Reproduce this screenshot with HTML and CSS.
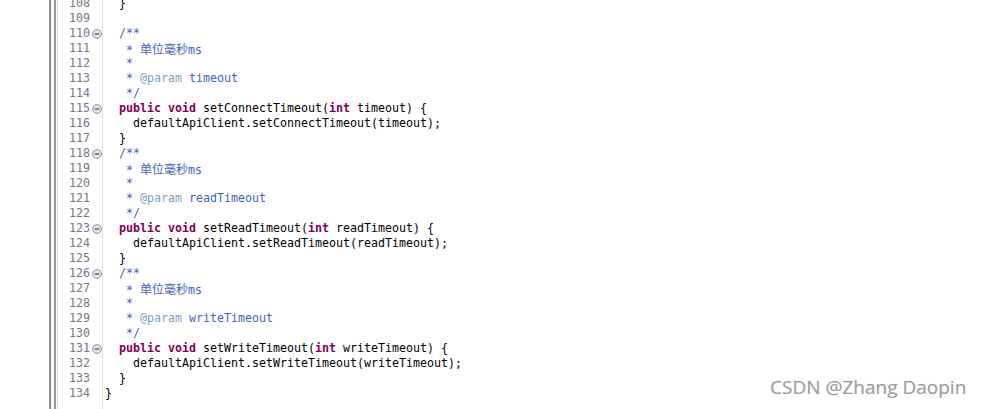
FILE: index.html
```html
<!DOCTYPE html>
<html lang="zh">
<head>
<meta charset="utf-8">
<title>Editor</title>
<link rel="stylesheet" href="styles.css">
</head>
<body>
<div class="editor">
  <div class="blank"></div>
  <div class="rail1"><div class="rail2"><div class="rail3">
    <div class="gutter">
      <div class="list">
        <div class="ln"><span class="num">108</span><span class="fold"></span></div>
        <div class="ln"><span class="num">109</span><span class="fold"></span></div>
        <div class="ln"><span class="num">110</span><span class="fold"><svg class="ficon" viewBox="0 0 10 10"><circle cx="5" cy="5" r="4.4"/><line x1="2.8" y1="5" x2="7.2" y2="5"/></svg></span></div>
        <div class="ln"><span class="num">111</span><span class="fold"></span></div>
        <div class="ln"><span class="num">112</span><span class="fold"></span></div>
        <div class="ln"><span class="num">113</span><span class="fold"></span></div>
        <div class="ln"><span class="num">114</span><span class="fold"></span></div>
        <div class="ln"><span class="num">115</span><span class="fold"><svg class="ficon" viewBox="0 0 10 10"><circle cx="5" cy="5" r="4.4"/><line x1="2.8" y1="5" x2="7.2" y2="5"/></svg></span></div>
        <div class="ln"><span class="num">116</span><span class="fold"></span></div>
        <div class="ln"><span class="num">117</span><span class="fold"></span></div>
        <div class="ln"><span class="num">118</span><span class="fold"><svg class="ficon" viewBox="0 0 10 10"><circle cx="5" cy="5" r="4.4"/><line x1="2.8" y1="5" x2="7.2" y2="5"/></svg></span></div>
        <div class="ln"><span class="num">119</span><span class="fold"></span></div>
        <div class="ln"><span class="num">120</span><span class="fold"></span></div>
        <div class="ln"><span class="num">121</span><span class="fold"></span></div>
        <div class="ln"><span class="num">122</span><span class="fold"></span></div>
        <div class="ln"><span class="num">123</span><span class="fold"><svg class="ficon" viewBox="0 0 10 10"><circle cx="5" cy="5" r="4.4"/><line x1="2.8" y1="5" x2="7.2" y2="5"/></svg></span></div>
        <div class="ln"><span class="num">124</span><span class="fold"></span></div>
        <div class="ln"><span class="num">125</span><span class="fold"></span></div>
        <div class="ln"><span class="num">126</span><span class="fold"><svg class="ficon" viewBox="0 0 10 10"><circle cx="5" cy="5" r="4.4"/><line x1="2.8" y1="5" x2="7.2" y2="5"/></svg></span></div>
        <div class="ln"><span class="num">127</span><span class="fold"></span></div>
        <div class="ln"><span class="num">128</span><span class="fold"></span></div>
        <div class="ln"><span class="num">129</span><span class="fold"></span></div>
        <div class="ln"><span class="num">130</span><span class="fold"></span></div>
        <div class="ln"><span class="num">131</span><span class="fold"><svg class="ficon" viewBox="0 0 10 10"><circle cx="5" cy="5" r="4.4"/><line x1="2.8" y1="5" x2="7.2" y2="5"/></svg></span></div>
        <div class="ln"><span class="num">132</span><span class="fold"></span></div>
        <div class="ln"><span class="num">133</span><span class="fold"></span></div>
        <div class="ln"><span class="num">134</span><span class="fold"></span></div>
      </div>
    </div>
    <div class="code">
      <div class="list">
<div class="cl">  }</div>
<div class="cl"> </div>
<div class="cl"><span class="doc">  /**</span></div>
<div class="cl"><span class="doc">   * <span class="cjk">单位毫秒</span>ms</span></div>
<div class="cl"><span class="doc">   *</span></div>
<div class="cl"><span class="doc">   * <span class="tag">@param</span> timeout</span></div>
<div class="cl"><span class="doc">   */</span></div>
<div class="cl">  <span class="kw">public</span> <span class="kw">void</span> setConnectTimeout(<span class="kw">int</span> timeout) {</div>
<div class="cl">    defaultApiClient.setConnectTimeout(timeout);</div>
<div class="cl">  }</div>
<div class="cl"><span class="doc">  /**</span></div>
<div class="cl"><span class="doc">   * <span class="cjk">单位毫秒</span>ms</span></div>
<div class="cl"><span class="doc">   *</span></div>
<div class="cl"><span class="doc">   * <span class="tag">@param</span> readTimeout</span></div>
<div class="cl"><span class="doc">   */</span></div>
<div class="cl">  <span class="kw">public</span> <span class="kw">void</span> setReadTimeout(<span class="kw">int</span> readTimeout) {</div>
<div class="cl">    defaultApiClient.setReadTimeout(readTimeout);</div>
<div class="cl">  }</div>
<div class="cl"><span class="doc">  /**</span></div>
<div class="cl"><span class="doc">   * <span class="cjk">单位毫秒</span>ms</span></div>
<div class="cl"><span class="doc">   *</span></div>
<div class="cl"><span class="doc">   * <span class="tag">@param</span> writeTimeout</span></div>
<div class="cl"><span class="doc">   */</span></div>
<div class="cl">  <span class="kw">public</span> <span class="kw">void</span> setWriteTimeout(<span class="kw">int</span> writeTimeout) {</div>
<div class="cl">    defaultApiClient.setWriteTimeout(writeTimeout);</div>
<div class="cl">  }</div>
<div class="cl">}</div>
      </div>
    </div>
  </div></div></div>
</div>
<div class="watermark">CSDN @Zhang Daopin</div>
</body>
</html>
```

FILE: styles.css
```css
html, body {
  margin: 0;
  padding: 0;
  background: #ffffff;
  height: 100%;
  overflow: hidden;
}

body {
  position: relative;
}

.editor {
  display: flex;
  height: 409px;
  overflow: hidden;
  font-family: "DejaVu Sans Mono", "Liberation Mono", monospace;
  font-size: 11.63px;
  line-height: 15px;
}

.blank {
  width: 49px;
  flex: none;
}

.rail1 {
  flex: 1;
  display: flex;
  border-left: 2px solid #8e8e8e;
  padding-left: 3px;
}

.rail2 {
  flex: 1;
  display: flex;
  border-left: 2px solid #9b9b9b;
  padding-left: 1px;
}

.rail3 {
  flex: 1;
  display: flex;
  border-left: 1px solid #d4d4d4;
}

.gutter {
  flex: none;
  width: 44px;
  border-right: 1px solid #e2e2e2;
}

.list {
  margin-top: -4px;
}

.ln {
  display: flex;
  height: 15px;
  align-items: center;
}

.num {
  width: 32px;
  text-align: right;
  color: #7b7583;
}

.fold {
  width: 12px;
  height: 15px;
  display: flex;
  align-items: center;
  padding-left: 2px;
  box-sizing: border-box;
}

.ficon {
  width: 10px;
  height: 10px;
  display: block;
}

.ficon circle {
  fill: #dfe4ea;
  stroke: #8796a6;
  stroke-width: 1;
}

.ficon line {
  stroke: #3f4a56;
  stroke-width: 1.2;
}

.code {
  flex: 1;
  padding-left: 2px;
  color: #000000;
}

.cl {
  height: 15px;
  white-space: pre;
}

.doc {
  color: #3f5fbf;
}

.tag {
  color: #7f9fbf;
}

.kw {
  color: #7f0055;
  font-weight: bold;
}

.cjk {
  font-family: "Noto Sans CJK SC", sans-serif;
  font-size: 12px;
}

.watermark {
  position: absolute;
  left: 770px;
  top: 378px;
  font-family: "Open Sans", sans-serif;
  font-size: 19px;
  line-height: 19px;
  color: #9c9c9c;
  text-shadow: 0 0 1px #d8d8d8;
  white-space: nowrap;
}
```
